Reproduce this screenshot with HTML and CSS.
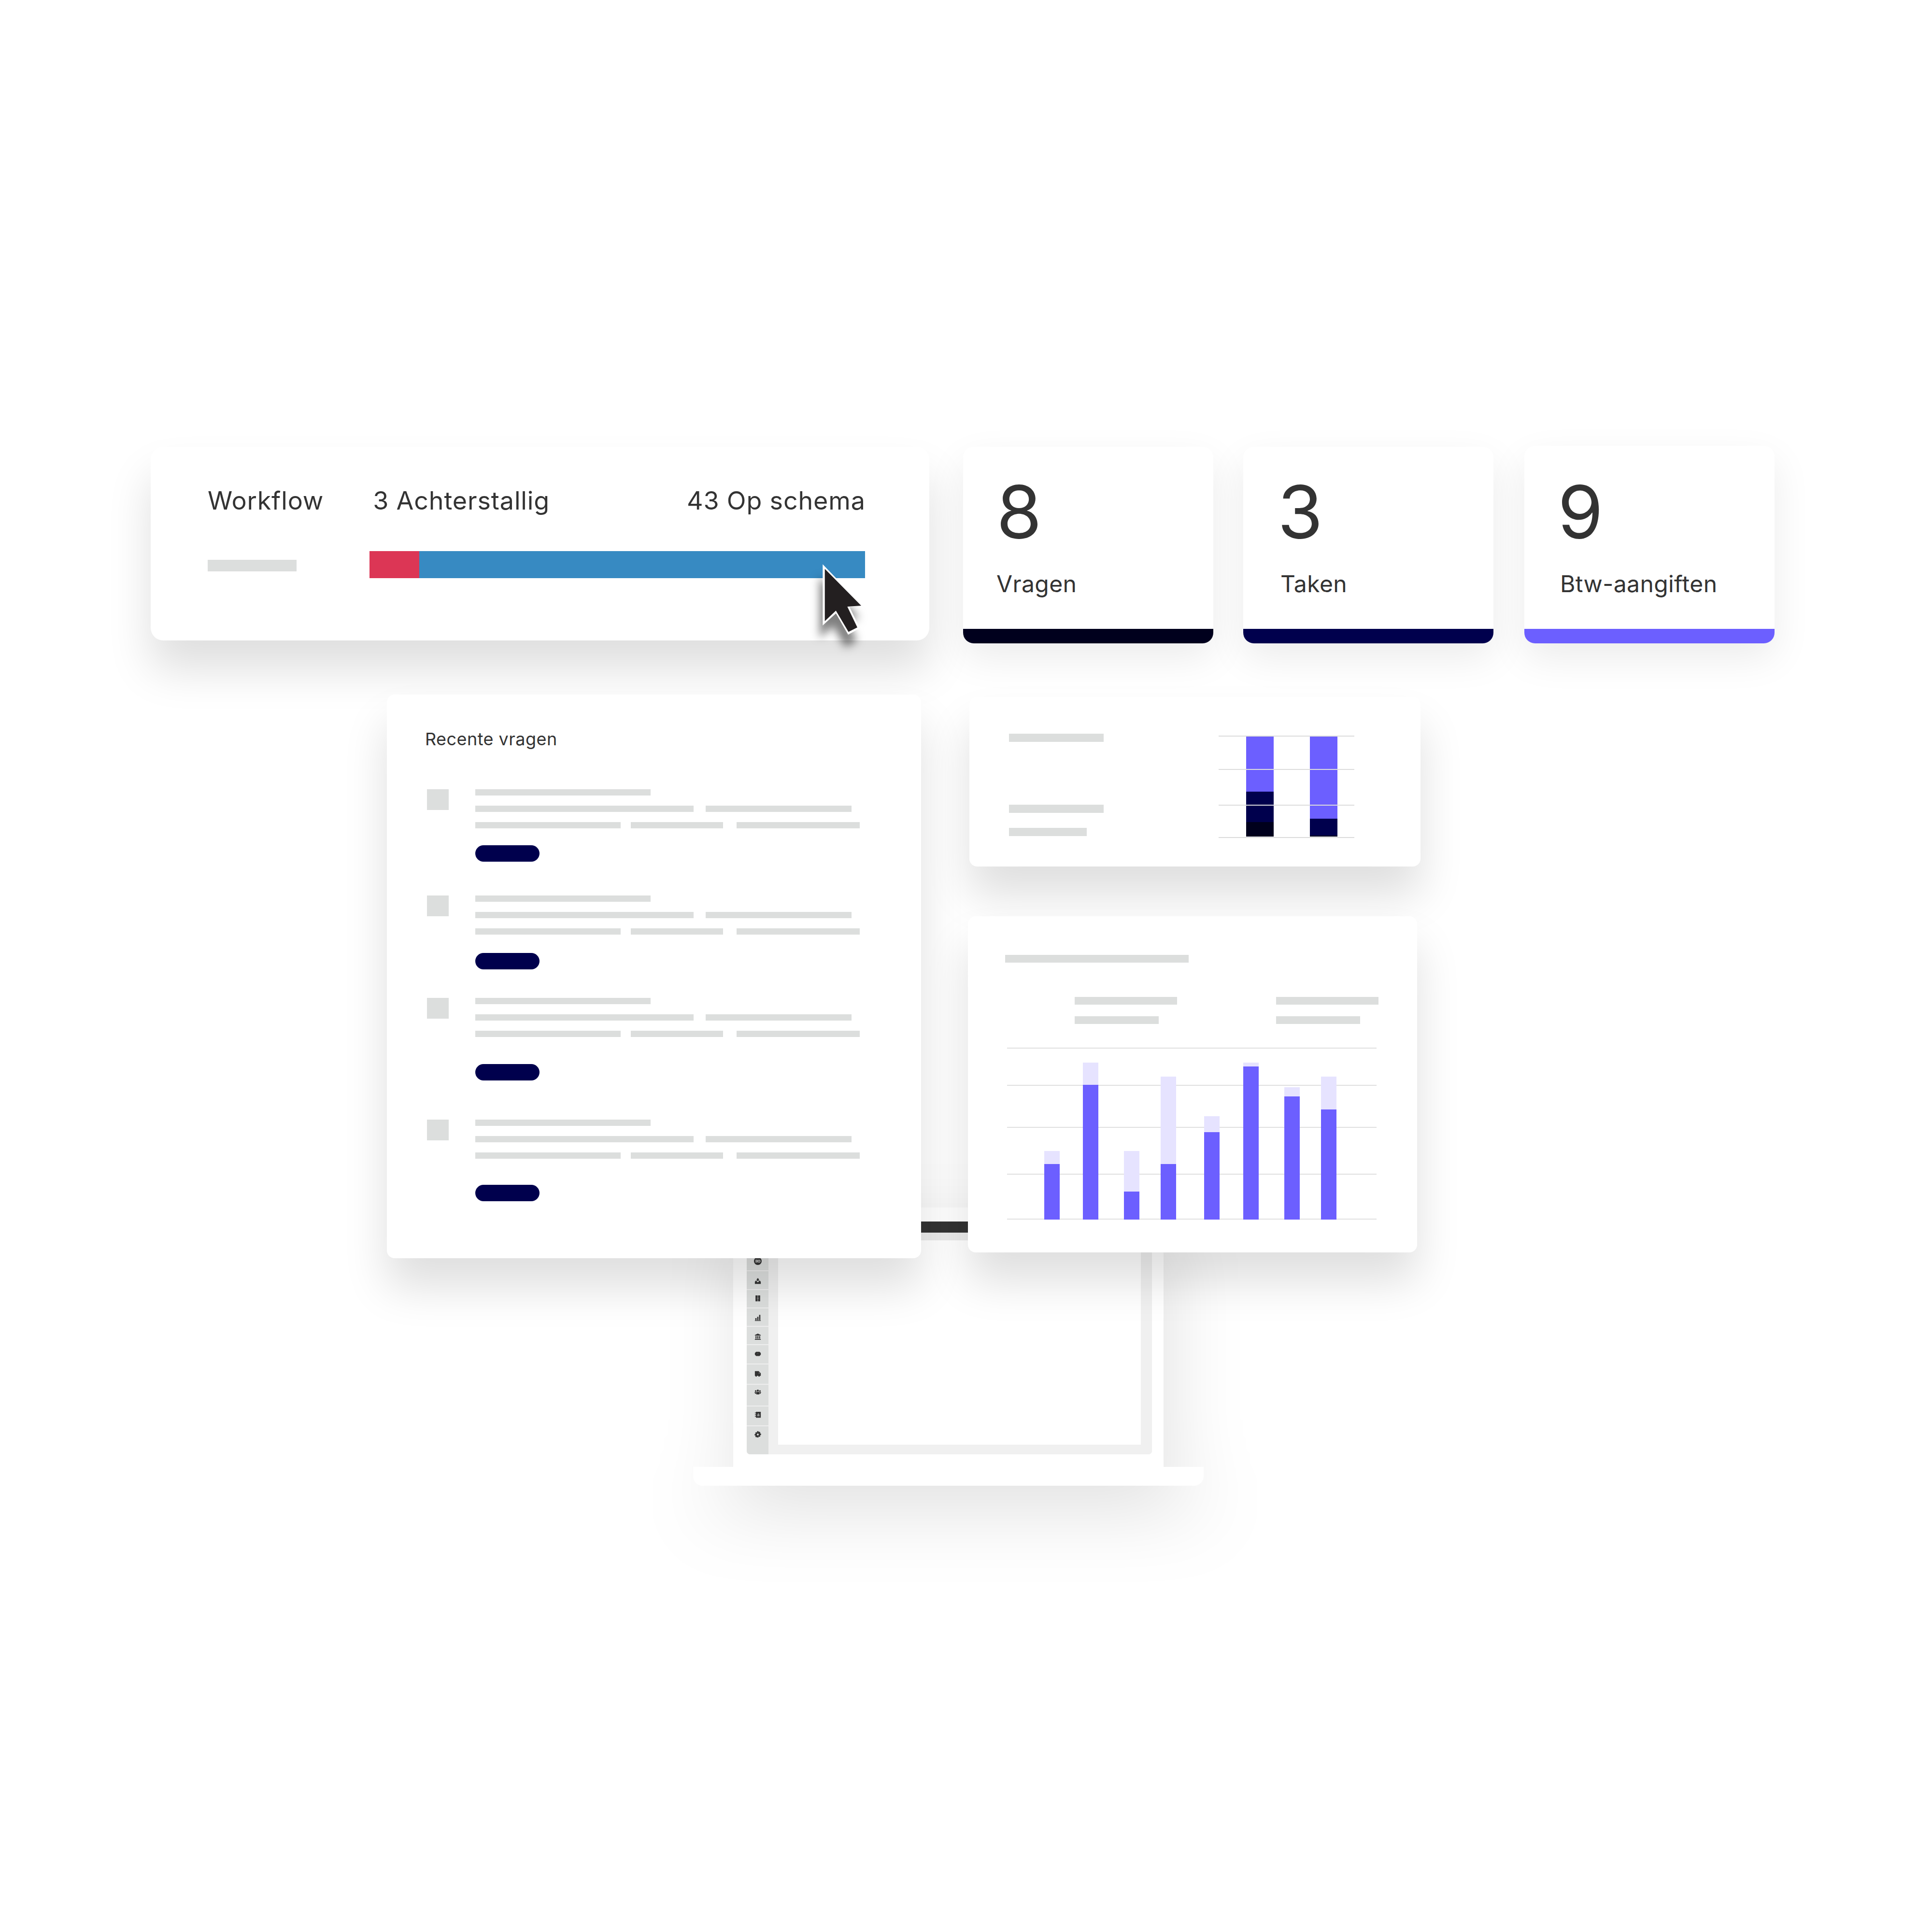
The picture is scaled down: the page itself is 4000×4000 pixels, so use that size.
FILE: index.html
```html
<!DOCTYPE html>
<html lang="nl">
<head>
    <meta charset="UTF-8">
    <title>Dashboard</title>
    <link rel="stylesheet" href="styles.css">
</head>
<body>
    <div class="canvas">
        <!-- Laptop behind the cards -->
        <div class="laptop">
            <div class="laptop-body">
                <div class="screen">
                    <div class="screen-top"></div>
                    <div class="screen-strip"></div>
                    <div class="screen-main">
                        <div class="side-nav">
                            <div class="nav-item nav-1"><svg class="icon-big" viewBox="0 0 16 16"><circle cx="8" cy="8" r="8"/><path class="icon-cut" d="M3.500 5h1.400v6H3.500zM5.800 5h1.400v6H5.800z"/><circle class="icon-ring" cx="10.500" cy="8" r="2.200"/></svg></div>
                            <div class="nav-item nav-2"><svg viewBox="0 0 16 16"><path d="M8 1l3.500 4H10v3H6V5H4.500zM1 10l2.500-3H5v1.500l3 3 3-3V7h1.500L15 10v5H1z"/></svg></div>
                            <div class="nav-item nav-3"><svg viewBox="0 0 16 16"><path d="M2.500 1h5v14h-5zM8.500 1h5v14h-5z"/><path class="icon-cut" d="M6 7.500h1v1H6zM9 7.500h1v1H9z"/></svg></div>
                            <div class="nav-item nav-4"><svg viewBox="0 0 16 16"><path d="M2 9h3v5H2zM6.500 6h3v8h-3zM11 1.500h3V14h-3zM1 14.700h14V16H1z"/></svg></div>
                            <div class="nav-item nav-5"><svg viewBox="0 0 16 16"><path d="M8 1l7 3.500V6H1V4.500zM2.500 7H5v6H2.500zM6.700 7h2.600v6H6.700zM11 7h2.500v6H11zM1 14h14v2H1z"/></svg></div>
                            <div class="nav-item nav-6"><svg viewBox="0 0 16 16"><path d="M4 3h8l3 3v4l-3 3H4l-3-3V6z"/><path class="icon-cut" d="M7.500 6.500h1v1h-1z"/></svg></div>
                            <div class="nav-item nav-7"><svg viewBox="0 0 16 16"><path d="M1 2h9l5 5v6h-2a2 2 0 0 1-4 0H6a2 2 0 0 1-4 0H1z"/><path class="icon-cut" d="M10.500 5l2 2.300h-2z"/></svg></div>
                            <div class="nav-item nav-8"><svg viewBox="0 0 16 16"><circle cx="3" cy="4.500" r="2"/><circle cx="8" cy="3.500" r="2.500"/><circle cx="13" cy="4.500" r="2"/><path d="M0 7h4v4H2zM4.500 6.500h7V12.500h-7zM12 7h4l-2 4h-2z"/></svg></div>
                            <div class="nav-item nav-9"><svg viewBox="0 0 16 16"><path d="M3.500 1H15v14H3.500zM1 3h3v1.500H1zM1 7h3v1.500H1zM1 11h3v1.500H1z"/><path class="icon-cut" d="M8.500 5h1.500v2H12v1H6.500V7h2zM6.500 9.500H12V11H6.500z"/></svg></div>
                            <div class="nav-item nav-10"><svg viewBox="0 0 16 16"><path fill-rule="evenodd" d="M6.500 0h3l.5 2.300 2-1.100 2.100 2.100-1.100 2 2.500.5v3.400l-2.500.5 1.100 2-2.100 2.100-2-1.100-.5 2.300h-3L6 13.700l-2 1.100-2.100-2.100 1.100-2-2.500-.5V6.800L3 6.300 1.900 4.300 4 2.200l2 1.100zM8 5.800a2.200 2.200 0 1 0 0 4.400 2.200 2.200 0 0 0 0-4.400z"/></svg></div>
                        </div>
                        <div class="screen-gutter">
                            <div class="screen-page"></div>
                        </div>
                    </div>
                </div>
            </div>
            <div class="laptop-base"></div>
        </div>

        <!-- Workflow -->
        <section class="card workflow">
            <div class="workflow-labels">
                <span class="workflow-title">Workflow</span>
                <span class="workflow-late">3 Achterstallig</span>
                <span class="workflow-ok">43 Op schema</span>
            </div>
            <div class="workflow-row">
                <div class="line workflow-line"></div>
                <div class="progress">
                    <div class="progress-late"></div>
                    <div class="progress-ok"></div>
                </div>
            </div>
        </section>

        <!-- Tellers -->
        <section class="card stat stat-1">
            <div class="stat-body"><p class="stat-number">8</p><p class="stat-label">Vragen</p></div>
            <div class="stat-foot foot-black"></div>
        </section>
        <section class="card stat stat-2">
            <div class="stat-body"><p class="stat-number">3</p><p class="stat-label">Taken</p></div>
            <div class="stat-foot foot-navy"></div>
        </section>
        <section class="card stat stat-3">
            <div class="stat-body"><p class="stat-number">9</p><p class="stat-label">Btw-aangiften</p></div>
            <div class="stat-foot foot-purple"></div>
        </section>

        <!-- Recente vragen -->
        <section class="card recent">
            <h2 class="recent-title">Recente vragen</h2>
            <div class="question q-1">
                <div class="q-check"></div>
                <div class="q-text">
                    <div class="line l-363"></div>
                    <div class="q-row"><div class="line l-452"></div><div class="line l-302 ml-25"></div></div>
                    <div class="q-row"><div class="line l-301"></div><div class="line l-191 ml-21"></div><div class="line l-255 ml-28"></div></div>
                    <div class="pill"></div>
                </div>
            </div>
            <div class="question q-2">
                <div class="q-check"></div>
                <div class="q-text">
                    <div class="line l-363"></div>
                    <div class="q-row"><div class="line l-452"></div><div class="line l-302 ml-25"></div></div>
                    <div class="q-row"><div class="line l-301"></div><div class="line l-191 ml-21"></div><div class="line l-255 ml-28"></div></div>
                    <div class="pill"></div>
                </div>
            </div>
            <div class="question q-3">
                <div class="q-check"></div>
                <div class="q-text">
                    <div class="line l-363"></div>
                    <div class="q-row"><div class="line l-452"></div><div class="line l-302 ml-25"></div></div>
                    <div class="q-row"><div class="line l-301"></div><div class="line l-191 ml-21"></div><div class="line l-255 ml-28"></div></div>
                    <div class="pill"></div>
                </div>
            </div>
            <div class="question q-4">
                <div class="q-check"></div>
                <div class="q-text">
                    <div class="line l-363"></div>
                    <div class="q-row"><div class="line l-452"></div><div class="line l-302 ml-25"></div></div>
                    <div class="q-row"><div class="line l-301"></div><div class="line l-191 ml-21"></div><div class="line l-255 ml-28"></div></div>
                    <div class="pill"></div>
                </div>
            </div>
        </section>

        <!-- Kleine grafiek -->
        <section class="card small-chart">
            <div class="small-lines">
                <div class="line small-line"></div>
                <div class="line small-line small-second"></div>
                <div class="line small-line small-third"></div>
            </div>
            <div class="small-plot">
                <div class="grid-line" style="top: 0"></div>
                <div class="grid-line" style="top: 69px"></div>
                <div class="grid-line" style="top: 143px"></div>
                <div class="grid-line" style="top: 210px"></div>
                <div class="small-bar bar-a">
                    <div class="seg-purple" style="height: 115px"></div>
                    <div class="seg-navy" style="height: 63px"></div>
                    <div class="seg-black" style="height: 30px"></div>
                </div>
                <div class="small-bar bar-b">
                    <div class="seg-purple" style="height: 171px"></div>
                    <div class="seg-navy" style="height: 35px"></div>
                    <div class="seg-black" style="height: 2px"></div>
                </div>
            </div>
        </section>

        <!-- Grote grafiek -->
        <section class="card big-chart">
            <div class="line big-title"></div>
            <div class="big-legend">
                <div class="legend-col"><div class="line l-212"></div><div class="line l-174"></div></div>
                <div class="legend-col"><div class="line l-212"></div><div class="line l-174"></div></div>
            </div>
            <div class="big-plot">
                <div class="big-grid" style="top: 0"></div>
                <div class="big-grid" style="top: 77px"></div>
                <div class="big-grid" style="top: 164px"></div>
                <div class="big-grid" style="top: 261px"></div>
                <div class="big-grid" style="top: 354px"></div>
                <div class="big-bars">
                    <div class="big-bar"><div class="seg-light" style="height: 27px"></div><div class="seg-purple" style="height: 115px"></div></div>
                    <div class="big-bar"><div class="seg-light" style="height: 46px"></div><div class="seg-purple" style="height: 279px"></div></div>
                    <div class="big-bar"><div class="seg-light" style="height: 84px"></div><div class="seg-purple" style="height: 58px"></div></div>
                    <div class="big-bar"><div class="seg-light" style="height: 181px"></div><div class="seg-purple" style="height: 115px"></div></div>
                    <div class="big-bar"><div class="seg-light" style="height: 33px"></div><div class="seg-purple" style="height: 181px"></div></div>
                    <div class="big-bar"><div class="seg-light" style="height: 8px"></div><div class="seg-purple" style="height: 317px"></div></div>
                    <div class="big-bar"><div class="seg-light" style="height: 19px"></div><div class="seg-purple" style="height: 255px"></div></div>
                    <div class="big-bar"><div class="seg-light" style="height: 68px"></div><div class="seg-purple" style="height: 228px"></div></div>
                </div>
            </div>
        </section>

        <!-- Cursor -->
        <svg class="cursor" viewBox="0 0 86 150">
            <path class="cursor-edge" d="M2.300 2.300V129L29.700 104L55 148L79 134.700L58 91L85 88Z"/>
            <path class="cursor-fill" d="M6.700 11.700L82 88L53.300 90L74 133L55.700 142.300L29.700 98.300L6.700 120Z"/>
        </svg>
    </div>
</body>
</html>
```

FILE: styles.css
```css
/* Global */
html, body {
    margin: 0;
    background: #fff;
}
body {
    font-family: Inter, "Noto Sans", sans-serif;
    color: #333;
}
p, h2 {
    margin: 0;
    font-weight: 400;
}
.canvas {
    position: relative;
    width: 4000px;
    height: 4000px;
    overflow: hidden;
}

/* Floating cards on the canvas */
.card {
    position: absolute;
    background: #fff;
    box-sizing: border-box;
    border-radius: 16px;
    box-shadow: 0 60px 90px rgba(0, 0, 0, .13);
}
.line {
    height: 13px;
    background: #dcdedd;
}

/* Workflow */
.workflow {
    left: 312px;
    top: 925px;
    width: 1612px;
    height: 401px;
    padding: 74px 0 0 118px;
    border-radius: 26px;
}
.workflow-labels {
    display: flex;
    height: 76px;
    font-size: 52px;
    line-height: 76px;
    letter-spacing: .85px;
    white-space: nowrap;
}
.workflow-late {
    margin-left: 102px;
}
.workflow-ok {
    margin-left: 284px;
}
.workflow-row {
    display: flex;
    align-items: center;
    margin-top: 66px;
}
.workflow-line {
    width: 184px;
    height: 24px;
    margin-top: 4px;
}
.progress {
    display: flex;
    width: 1026px;
    height: 56px;
    margin-left: 151px;
}
.progress-late {
    width: 103px;
    background: #dc3655;
}
.progress-ok {
    flex: 1;
    background: #378ac2;
}

/* Tellers */
.stat {
    display: flex;
    flex-direction: column;
    width: 518px;
    height: 407px;
    overflow: hidden;
    border-radius: 22px;
    box-shadow: 0 30px 80px rgba(0, 0, 0, .08);
}
.stat-1 { left: 1994px; top: 925px; }
.stat-2 { left: 2574px; top: 925px; }
.stat-3 { left: 3156px; top: 923px; height: 409px; }
.stat-body {
    flex: 1;
    padding: 43px 0 0 69px;
}
.stat-2 .stat-body { padding-left: 77px; }
.stat-3 .stat-body { padding-left: 74px; padding-top: 45px; }
.stat-number {
    font-size: 152px;
    line-height: 184px;
}
.stat-2 .stat-number { margin-left: -6px; }
.stat-3 .stat-number { margin-left: -5px; }
.stat-label {
    margin-top: 27px;
    font-size: 48px;
    line-height: 60px;
    letter-spacing: .4px;
}
.stat-foot {
    height: 30px;
}
.foot-black { background: #00001d; }
.foot-navy { background: #00004d; }
.foot-purple { background: #6c5fff; }

/* Recente vragen */
.recent {
    left: 801px;
    top: 1438px;
    width: 1106px;
    height: 1167px;
    padding: 70px 0 0 81px;
}
.recent-title {
    margin-left: -2px;
    font-size: 36px;
    line-height: 44px;
    letter-spacing: .45px;
}
.question {
    display: flex;
}
.q-1 { margin-top: 82px; }
.q-2 { margin-top: 70px; }
.q-3 { margin-top: 59px; }
.q-4 { margin-top: 81px; }
.q-check {
    width: 45px;
    height: 43px;
    margin: 0 55px 0 2px;
    background: #dcdedd;
}
.q-row {
    display: flex;
    margin-top: 21px;
}
.l-363 { width: 363px; }
.l-452 { width: 452px; }
.l-302 { width: 302px; }
.l-301 { width: 301px; }
.l-191 { width: 191px; }
.l-255 { width: 255px; }
.l-212 { width: 212px; }
.l-174 { width: 174px; }
.ml-25 { margin-left: 25px; }
.ml-21 { margin-left: 21px; }
.ml-28 { margin-left: 28px; }
.pill {
    width: 133px;
    height: 34px;
    margin-top: 35px;
    border-radius: 17px;
    background: #00004d;
}
.q-2 .pill { margin-top: 38px; }
.q-3 .pill { margin-top: 56px; }
.q-4 .pill { margin-top: 54px; }

/* Kleine grafiek */
.small-chart {
    display: flex;
    left: 2007px;
    top: 1443px;
    width: 934px;
    height: 351px;
    padding: 76px 0 0 82px;
}
.small-lines {
    width: 434px;
}
.small-line {
    width: 196px;
    height: 17px;
}
.small-second { margin-top: 130px; }
.small-third { width: 161px; margin-top: 31px; }
.small-plot {
    position: relative;
    display: flex;
    width: 281px;
    height: 212px;
    margin-top: 4px;
}
.grid-line {
    position: absolute;
    left: 0;
    right: 0;
    height: 2px;
    background: #dcdcdc;
    z-index: 1;
}
.small-bar {
    display: flex;
    flex-direction: column;
    width: 57px;
    margin-top: 1px;
}
.bar-a { margin-left: 57px; }
.bar-b { margin-left: 75px; }
.seg-purple { background: #6c5fff; }
.seg-navy { background: #00004d; }
.seg-black { background: #00001d; }
.seg-light { background: #e6e3ff; }

/* Grote grafiek */
.big-chart {
    left: 2004px;
    top: 1897px;
    width: 930px;
    height: 696px;
    padding: 80px 0 0 77px;
}
.big-title {
    width: 380px;
    height: 16px;
}
.big-legend {
    display: flex;
    margin: 71px 0 0 144px;
    gap: 205px;
}
.legend-col .line {
    height: 16px;
    margin-bottom: 24px;
}
.big-plot {
    position: relative;
    width: 765px;
    height: 356px;
    margin: 25px 0 0 4px;
}
.big-grid {
    position: absolute;
    left: 0;
    right: 0;
    height: 2px;
    background: #e0e0e0;
}
.big-bars {
    position: absolute;
    inset: 0;
    display: flex;
    align-items: flex-end;
    padding-left: 77px;
}
.big-bar {
    position: relative;
    width: 32px;
    margin-right: 48px;
}
.big-bar:nth-child(2) { margin-right: 53px; }
.big-bar:nth-child(3) { margin-right: 44px; }
.big-bar:nth-child(4) { margin-right: 58px; }
.big-bar:nth-child(5) { margin-right: 49px; }
.big-bar:nth-child(6) { margin-right: 53px; }
.big-bar:nth-child(7) { margin-right: 44px; }

/* Laptop */
.laptop {
    position: absolute;
    left: 1435px;
    top: 2500px;
    width: 1057px;
    filter: drop-shadow(14px 55px 75px rgba(0, 0, 0, .115));
}
.laptop-body {
    width: 891px;
    height: 537px;
    margin-left: 83px;
    padding: 29px 24px 26px 28px;
    box-sizing: border-box;
    background: #fff;
}
.screen {
    display: flex;
    flex-direction: column;
    height: 100%;
    overflow: hidden;
    border-radius: 0 0 7px 7px;
    background: #f0f0f0;
}
.screen-top {
    flex: none;
    height: 23px;
    background: #333;
}
.screen-strip {
    flex: none;
    height: 16px;
    background: #eaeaea;
}
.screen-main {
    flex: 1;
    display: flex;
    background: #f0f0f0;
}
.side-nav {
    flex: none;
    width: 45px;
    background: #dcdedd;
}
.nav-item {
    display: flex;
    justify-content: center;
    align-items: flex-start;
    box-sizing: border-box;
    border-bottom: 2px solid #eee;
}
.nav-item svg {
    width: 14px;
    height: 14px;
    fill: #333;
}
.nav-item .icon-big {
    width: 16px;
    height: 16px;
}
.nav-item .icon-cut {
    fill: #dcdedd;
}
.nav-item .icon-ring {
    fill: none;
    stroke: #dcdedd;
    stroke-width: 1.300;
}
.nav-1 { height: 64px; padding-top: 35px; }
.nav-2 { height: 39px; padding-top: 13px; }
.nav-3 { height: 38px; padding-top: 10px; }
.nav-4 { height: 38px; padding-top: 12px; }
.nav-5 { height: 38px; padding-top: 13px; }
.nav-6 { height: 40px; padding-top: 11px; }
.nav-7 { height: 42px; padding-top: 12px; }
.nav-8 { height: 45px; padding-top: 9px; }
.nav-9 { height: 41px; padding-top: 10px; }
.nav-10 { height: 58px; padding-top: 10px; border-bottom: 0; }
.screen-gutter {
    flex: 1;
    padding: 0 23px 20px 20px;
}
.screen-page {
    height: 100%;
    background: #fff;
}
.laptop-base {
    height: 39px;
    border-radius: 0 0 20px 20px;
    background: #fff;
}

/* Cursor */
.cursor {
    position: absolute;
    left: 1701px;
    top: 1166px;
    width: 86px;
    height: 150px;
    overflow: visible;
    filter: drop-shadow(-6px 26px 9px rgba(0, 0, 0, .5));
}
.cursor-edge { fill: #fff; }
.cursor-fill { fill: #231f20; }
```
